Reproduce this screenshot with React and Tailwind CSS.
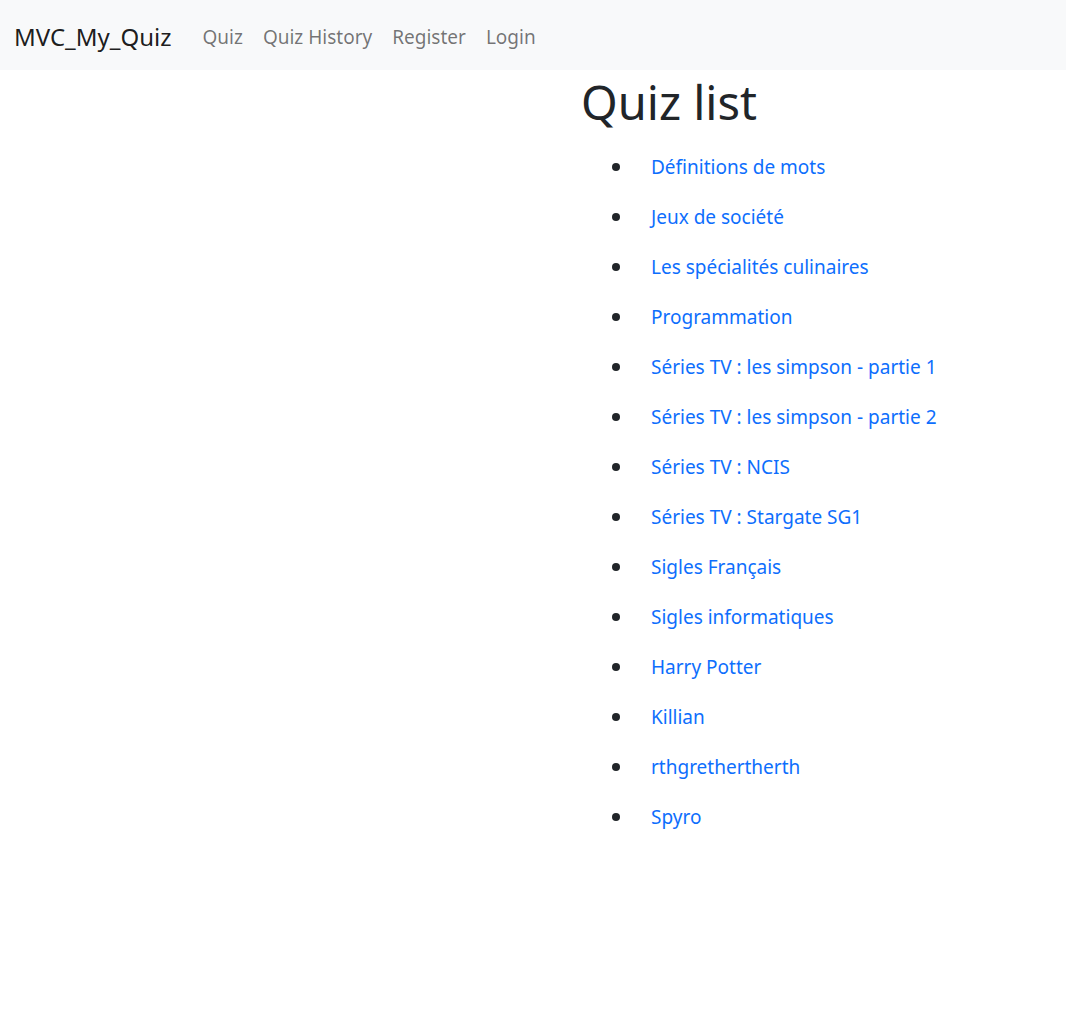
import React from 'react';

const quizzes = [
  'Définitions de mots',
  'Jeux de société',
  'Les spécialités culinaires',
  'Programmation',
  'Séries TV : les simpson - partie 1',
  'Séries TV : les simpson - partie 2',
  'Séries TV : NCIS',
  'Séries TV : Stargate SG1',
  'Sigles Français',
  'Sigles informatiques',
  'Harry Potter',
  'Killian',
  'rthgrethertherth',
  'Spyro',
];

const navLinks = ['Quiz', 'Quiz History', 'Register', 'Login'];

export default function App() {
  return (
    <div className="min-h-screen bg-white font-['Segoe_UI','Noto_Sans',sans-serif] text-[#212529]">
      <nav className="h-[70px] bg-[#f8f9fa] flex items-center px-[14px] pt-[4px]">
        <a href="#" className="text-[24px] text-black/90 mr-[21px]">MVC_My_Quiz</a>
        <div className="flex items-center">
          {navLinks.map((link) => (
            <a key={link} href="#" className="px-[10px] text-[19px] text-black/55">
              {link}
            </a>
          ))}
        </div>
      </nav>

      <main className="pl-[581px]">
        <h1 className="text-[47px] leading-[60px] mt-[2px] mb-[10px]">Quiz list</h1>
        <ul className="flex flex-col">
          {quizzes.map((quiz) => (
            <li key={quiz} className="h-[50px] flex items-center">
              <span className="w-[8px] h-[8px] rounded-full bg-[#212529] ml-[31px] mr-[31px]"></span>
              <a href="#" className="text-[19px] text-[#0d6efd]">{quiz}</a>
            </li>
          ))}
        </ul>
      </main>
    </div>
  );
}
